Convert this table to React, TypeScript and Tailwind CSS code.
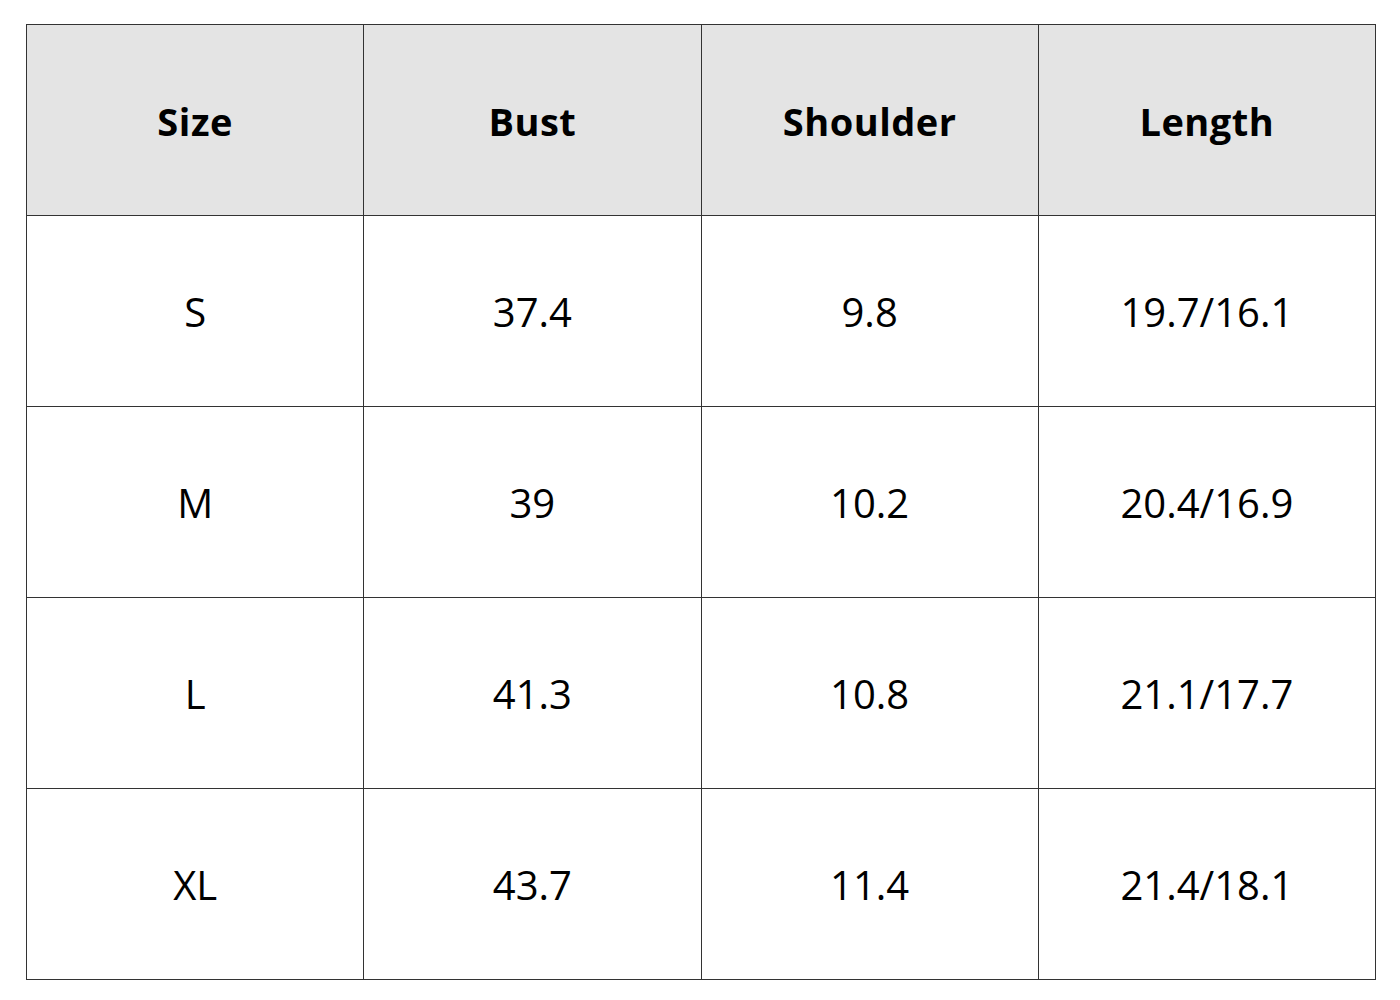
const headers = ['Size', 'Bust', 'Shoulder', 'Length']

const rows = [
  ['S', '37.4', '9.8', '19.7/16.1'],
  ['M', '39', '10.2', '20.4/16.9'],
  ['L', '41.3', '10.8', '21.1/17.7'],
  ['XL', '43.7', '11.4', '21.4/18.1'],
]

export default function App() {
  return (
    <div className="min-h-screen bg-white pt-[24px] pl-[26px]" style={{ fontFamily: '"Open Sans", "Liberation Sans", sans-serif' }}>
      <table className="w-[1350px] border-collapse table-fixed text-black">
        <thead>
          <tr>
            {headers.map((h) => (
              <th key={h} className="h-[191px] border border-[#333] bg-[#e4e4e4] pt-[3px] text-center align-middle text-[38px] font-bold tracking-[0.5px]">
                {h}
              </th>
            ))}
          </tr>
        </thead>
        <tbody>
          {rows.map((r) => (
            <tr key={r[0]}>
              {r.map((c, i) => (
                <td key={i} className="h-[191px] border border-[#333] pt-[2px] text-center align-middle text-[40px] font-normal">
                  {c}
                </td>
              ))}
            </tr>
          ))}
        </tbody>
      </table>
    </div>
  )
}
